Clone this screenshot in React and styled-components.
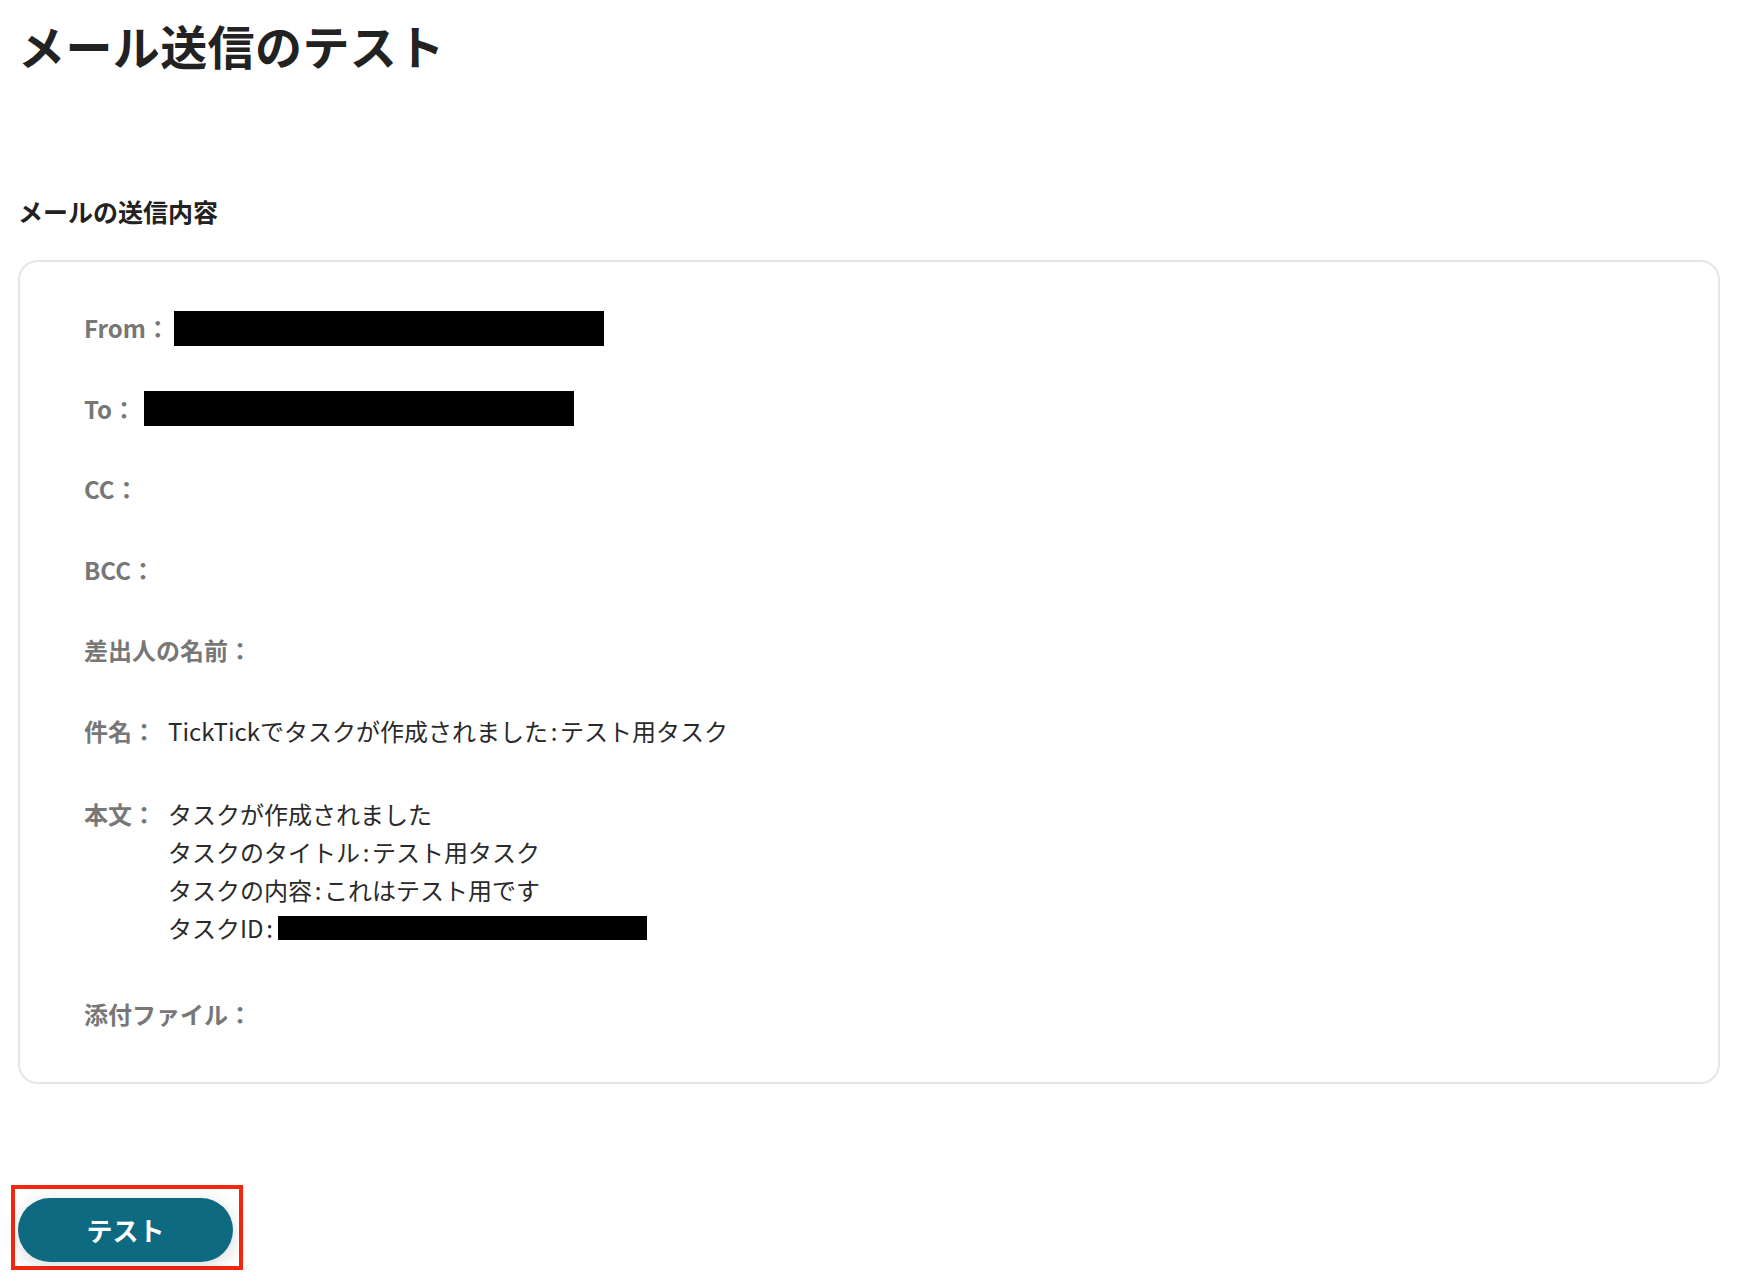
import styled, { createGlobalStyle } from "styled-components";

const GlobalStyle = createGlobalStyle`
  body {
    margin: 0;
    background: #fff;
    font-family: "Noto Sans CJK JP", "Noto Sans", sans-serif;
    color: #222;
  }
`;

const Page = styled.div`
  padding: 10px 20px 0 18px;
`;

const Title = styled.h1`
  margin: 0;
  font-size: 47px;
  line-height: 69px;
  font-weight: 700;
  color: #222;
  letter-spacing: 0.4px;
`;

const SectionLabel = styled.h2`
  margin: 114px 0 0;
  font-size: 25px;
  line-height: 36px;
  font-weight: 700;
  color: #222;
`;

const Card = styled.div`
  margin-top: 31px;
  border: 2px solid #e6e6e6;
  border-radius: 20px;
  padding: 47px 64px 49px;
  display: flex;
  flex-direction: column;
  gap: 42.5px;
`;

const Row = styled.div`
  display: flex;
  align-items: ${(p) => (p.$top ? "flex-start" : "center")};
  font-size: 24px;
  line-height: 38px;
  margin: ${(p) => (p.$top ? "3px 0 5px" : "0")};
`;

const Label = styled.span`
  color: #777;
  font-weight: 700;
  white-space: nowrap;
`;

const Value = styled.div`
  margin-left: ${(p) => p.$gap ?? 12}px;
  color: #2a2a2a;
  font-weight: 400;
  display: flex;
  flex-direction: column;
`;

const Colon = styled.span`
  display: inline-block;
  width: 12px;
  text-align: center;
`;

const Redact = styled.span`
  display: inline-block;
  background: #000;
  width: ${(p) => p.$w}px;
  height: ${(p) => p.$h}px;
  margin-left: ${(p) => p.$ml || 0}px;
  vertical-align: middle;
`;

const Line = styled.div`
  display: flex;
  align-items: center;
`;

const Highlight = styled.div`
  display: inline-block;
  margin: 101px 0 0 -7px;
  border: 4px solid #f4260e;
  padding: 9px 6px 4px 3px;
`;

const TestButton = styled.button`
  display: block;
  width: 215px;
  height: 64px;
  border: none;
  border-radius: 32px;
  background: #0d6a80;
  color: #fff;
  font-family: "Noto Sans CJK JP", "Noto Sans", sans-serif;
  font-size: 26px;
  font-weight: 700;
  box-shadow: 0 4px 18px rgba(40, 50, 70, 0.18);
  cursor: pointer;
`;

const rows = [
  { label: "From：", redact: [430, 35], gap: 4 },
  { label: "To：", redact: [430, 35], gap: 8 },
  { label: "CC：" },
  { label: "BCC：" },
  { label: "差出人の名前：" },
  { label: "件名：", text: ["TickTickでタスクが作成されました", "テスト用タスク"] },
];

export default function App() {
  return (
    <>
      <GlobalStyle />
      <Page>
        <Title>メール送信のテスト</Title>
        <SectionLabel>メールの送信内容</SectionLabel>
        <Card>
          {rows.map((r) => (
            <Row key={r.label}>
              <Label>{r.label}</Label>
              {r.redact && (
                <Value $gap={r.gap}>
                  <Redact $w={r.redact[0]} $h={r.redact[1]} />
                </Value>
              )}
              {r.text && (
                <Value>
                  <Line>
                    {r.text[0]}
                    <Colon>:</Colon>
                    {r.text[1]}
                  </Line>
                </Value>
              )}
            </Row>
          ))}
          <Row $top>
            <Label>本文：</Label>
            <Value>
              <Line>タスクが作成されました</Line>
              <Line>
                タスクのタイトル<Colon>:</Colon>テスト用タスク
              </Line>
              <Line>
                タスクの内容<Colon>:</Colon>これはテスト用です
              </Line>
              <Line>
                タスクID<Colon>:</Colon>
                <Redact $w={369} $h={24} $ml={2} />
              </Line>
            </Value>
          </Row>
          <Row>
            <Label>添付ファイル：</Label>
          </Row>
        </Card>
        <Highlight>
          <TestButton>テスト</TestButton>
        </Highlight>
      </Page>
    </>
  );
}
